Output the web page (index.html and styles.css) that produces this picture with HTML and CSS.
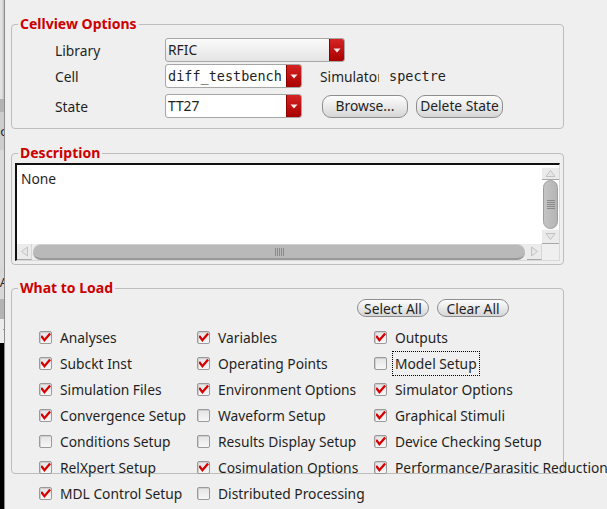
FILE: index.html
```html
<!DOCTYPE html>
<html>
<head>
<meta charset="utf-8">
<link rel="stylesheet" href="styles.css">
</head>
<body>
<div class="screen">
  <div class="strip">
    <div class="s s1"></div>
    <div class="s s2"></div>
    <div class="s s3"><span>o</span></div>
    <div class="s s4"></div>
    <div class="s s5"><span>A</span></div>
    <div class="s s6"></div>
    <div class="s s7"><span>t</span></div>
    <div class="s s8"></div>
  </div>
  <div class="dialog">
    <section class="group g-cell">
      <div class="group-title">Cellview Options</div>
      <div class="rows">
        <div class="row">
          <span class="lbl">Library</span>
          <div class="combo combo-ro w-wide"><span class="combo-text">RFIC</span><span class="drop"><svg width="8" height="5" viewBox="0 0 8 5"><path d="M0.5 0.5H7.5L4 4.5Z" fill="#fbeaea"/></svg></span></div>
        </div>
        <div class="row">
          <span class="lbl">Cell</span>
          <div class="combo w-narrow"><span class="combo-text mono">diff_testbench</span><span class="drop"><svg width="8" height="5" viewBox="0 0 8 5"><path d="M0.5 0.5H7.5L4 4.5Z" fill="#fbeaea"/></svg></span></div>
          <span class="sim-label">Simulator</span><span class="mono sim-value">spectre</span>
        </div>
        <div class="row row-state">
          <span class="lbl">State</span>
          <div class="combo w-narrow"><span class="combo-text">TT27</span><span class="drop"><svg width="8" height="5" viewBox="0 0 8 5"><path d="M0.5 0.5H7.5L4 4.5Z" fill="#fbeaea"/></svg></span></div>
          <button class="btn btn-browse">Browse...</button>
          <button class="btn btn-delete">Delete State</button>
        </div>
      </div>
    </section>

    <section class="group g-desc">
      <div class="group-title">Description</div>
      <div class="textarea">
        <div class="text-content">None</div>
        <div class="vsb">
          <div class="sb-btn"><svg width="13" height="13" viewBox="0 0 13 13"><path d="M2 9.5 L6.5 3.5 L11 9.5 Z" fill="#e6e6e6" stroke="#c2c2c2"/></svg></div>
          <div class="vthumb"><svg width="8" height="9" viewBox="0 0 8 9"><path d="M0 0.5H8M0 2.5H8M0 4.5H8M0 6.5H8M0 8.5H8" stroke="#8a8a8a"/></svg></div>
          <div class="sb-btn"><svg width="13" height="13" viewBox="0 0 13 13"><path d="M2 3.5 L6.5 9.5 L11 3.5 Z" fill="#e6e6e6" stroke="#c2c2c2"/></svg></div>
        </div>
        <div class="hsb">
          <div class="sb-btn hbtn"><svg width="13" height="13" viewBox="0 0 13 13"><path d="M9.5 2 L3.5 6.5 L9.5 11 Z" fill="#e6e6e6" stroke="#c2c2c2"/></svg></div>
          <div class="hthumb"><svg width="9" height="8" viewBox="0 0 9 8"><path d="M0.5 0V8M2.5 0V8M4.5 0V8M6.5 0V8M8.5 0V8" stroke="#8a8a8a"/></svg></div>
          <div class="sb-btn hbtn"><svg width="13" height="13" viewBox="0 0 13 13"><path d="M3.5 2 L9.5 6.5 L3.5 11 Z" fill="#e6e6e6" stroke="#c2c2c2"/></svg></div>
        </div>
        <div class="corner"></div>
      </div>
    </section>

    <section class="group g-load">
      <div class="group-title">What to Load</div>
      <div class="btn-row">
        <button class="btn btn-small">Select All</button>
        <button class="btn btn-small">Clear All</button>
      </div>
      <div class="checks">
        <label class="chk"><span class="box on"></span><span>Analyses</span></label>
        <label class="chk"><span class="box on"></span><span>Variables</span></label>
        <label class="chk"><span class="box on"></span><span>Outputs</span></label>
        <label class="chk"><span class="box on"></span><span>Subckt Inst</span></label>
        <label class="chk"><span class="box on"></span><span>Operating Points</span></label>
        <label class="chk"><span class="box"></span><span class="focus">Model Setup</span></label>
        <label class="chk"><span class="box on"></span><span>Simulation Files</span></label>
        <label class="chk"><span class="box on"></span><span>Environment Options</span></label>
        <label class="chk"><span class="box on"></span><span>Simulator Options</span></label>
        <label class="chk"><span class="box on"></span><span>Convergence Setup</span></label>
        <label class="chk"><span class="box"></span><span>Waveform Setup</span></label>
        <label class="chk"><span class="box on"></span><span>Graphical Stimuli</span></label>
        <label class="chk"><span class="box"></span><span>Conditions Setup</span></label>
        <label class="chk"><span class="box"></span><span>Results Display Setup</span></label>
        <label class="chk"><span class="box on"></span><span>Device Checking Setup</span></label>
        <label class="chk"><span class="box on"></span><span>RelXpert Setup</span></label>
        <label class="chk"><span class="box on"></span><span>Cosimulation Options</span></label>
        <label class="chk"><span class="box on"></span><span>Performance/Parasitic Reduction</span></label>
        <label class="chk"><span class="box on"></span><span>MDL Control Setup</span></label>
        <label class="chk"><span class="box"></span><span>Distributed Processing</span></label>
      </div>
    </section>
  </div>
</div>
</body>
</html>
```

FILE: styles.css
```css
* { box-sizing: border-box; }
html, body { margin: 0; padding: 0; }
body {
  background: #efefef;
  font-family: "Noto Sans", "DejaVu Sans", sans-serif;
  font-size: 13.8px;
  color: #1f1f1f;
}
.screen {
  display: flex;
  width: 607px;
  height: 509px;
  overflow: hidden;
}

/* strip of a window behind the dialog */
.strip {
  width: 4px;
  flex: none;
  display: flex;
  flex-direction: column;
  overflow: hidden;
  font-size: 13px;
}
.s { display: flex; justify-content: flex-end; overflow: hidden; white-space: nowrap; }
.s span { margin-right: -4px; line-height: 1; }
.s1 { height: 99px; background: linear-gradient(90deg, #e2e2e2 0, #e2e2e2 2px, #c8c8c8 3px); }
.s2 { height: 13px; background: #b4b4b4; }
.s3 { height: 38px; background: #cdcdcd; align-items: center; }
.s4 { height: 116px; background: #dadada; }
.s5 { height: 33px; background: #d8d8d8; align-items: center; }
.s6 { height: 20px; background: #b4b4b4; }
.s7 { height: 24px; background: #ececec; align-items: center; }
.s8 { flex: 1; background: #000; }

.dialog {
  flex: 1;
  min-width: 0;
  border-left: 1px solid #8c8c8c;
  padding: 24px 43px 0 6px;
}

.group {
  border: 1px solid #bdbdbd;
  border-radius: 4px;
}
.group-title {
  width: fit-content;
  margin: -10px 0 0 6px;
  padding: 0 2px;
  background: #efefef;
  color: #cc0000;
  font-weight: 700;
  font-size: 14px;
  line-height: 18px;
}

/* Cellview options */
.rows {
  display: flex;
  flex-direction: column;
  padding: 4px 0 9px 43px;
}
.row {
  display: flex;
  align-items: center;
  height: 26px;
}
.row-state { margin-top: 4px; }
.lbl {
  width: 110px;
  flex: none;
}
.mono {
  font-family: "DejaVu Sans Mono", "Liberation Mono", monospace;
  font-size: 13.5px;
}
.combo {
  display: flex;
  height: 24px;
  border: 1px solid #a6a6a6;
  border-radius: 3px;
  background: #fff;
  overflow: hidden;
  flex: none;
}
.combo-ro { background: linear-gradient(#fbfbfb, #e4e4e4); }
.w-wide { width: 180px; }
.w-narrow { width: 137px; }
.combo-text {
  flex: 1;
  padding-left: 2px;
  line-height: 22px;
  white-space: nowrap;
  overflow: hidden;
}
.drop {
  width: 15px;
  flex: none;
  display: flex;
  align-items: center;
  justify-content: center;
  background: linear-gradient(#d52424, #a80000);
  border-left: 1px solid #8c0000;
}
.sim-label {
  margin-left: 18px;
  width: 59px;
  overflow: hidden;
  white-space: nowrap;
  flex: none;
}
.sim-value { margin-left: 10px; }

.btn {
  font-family: "Noto Sans", "DejaVu Sans", sans-serif;
  font-size: 13.8px;
  color: #1f1f1f;
  border: 1px solid #8e8e8e;
  border-radius: 9px;
  background: linear-gradient(#fdfdfd, #d6d6d6);
  padding: 0;
  height: 23px;
  line-height: 20px;
  text-align: center;
  flex: none;
}
.btn-browse { width: 86px; margin-left: 20px; }
.btn-delete { width: 87px; margin-left: 8px; }

/* Description */
.g-desc { margin-top: 24px; padding: 0 3px 3px; }
.g-desc .group-title { margin-left: 3px; }
.textarea {
  margin-top: 1px;
  height: 98px;
  display: grid;
  grid-template-columns: 1fr 17px;
  grid-template-rows: 1fr 16px;
  border-top: 2px solid #111;
  border-left: 2px solid #111;
  border-right: 1px solid #d8d8d8;
  border-bottom: 1px solid #d8d8d8;
  background: #fff;
}
.text-content {
  padding: 4px 4px;
  line-height: 20px;
}
.vsb {
  display: flex;
  flex-direction: column;
  padding-top: 2px;
  background: #fff;
}
.sb-btn {
  height: 13px;
  flex: none;
  display: flex;
  align-items: center;
  justify-content: center;
  background: #ebebeb;
  border-top: 1px solid #fafafa;
  border-bottom: 1px solid #a8a8a8;
}
.vsb .sb-btn:last-child { height: 15px; }
.vthumb {
  flex: 1;
  margin: 0 1px;
  border-radius: 8px;
  background: linear-gradient(90deg, #c4c4c4, #b4b4b4);
  border: 1px solid #9c9c9c;
  display: flex;
  align-items: center;
  justify-content: center;
}
.hsb {
  display: flex;
  background: #ececec;
}
.hbtn {
  height: 16px;
  width: 15px;
  border-top: none;
  border-right: 1px solid #d6d6d6;
}
.hthumb {
  flex: 1;
  margin: 0 2px 0 1px;
  border-radius: 8px;
  background: #b9b9b9;
  border-top: 1px solid #cfcfcf;
  border-bottom: 2px solid #989898;
  display: flex;
  align-items: center;
  justify-content: center;
}
.corner { background: #efefef; }

/* What to load */
.g-load {
  margin-top: 23px;
  height: 186px;
}
.btn-row {
  display: flex;
  justify-content: flex-end;
  gap: 8px;
  padding-right: 54px;
  margin-top: 2px;
}
.btn-small {
  width: 72px;
  height: 18px;
  line-height: 15px;
}
.checks {
  margin-top: 7px;
  padding-left: 27px;
  display: grid;
  grid-template-columns: 158px 177px 1fr;
  grid-auto-rows: 26px;
}
.chk {
  display: flex;
  align-items: center;
  gap: 8px;
  white-space: nowrap;
}
.box {
  width: 13px;
  height: 13px;
  flex: none;
  border: 1px solid #9a9a9a;
  border-radius: 2px;
  background: linear-gradient(#e4e4e4, #f7f7f7);
  box-shadow: inset 1px 1px 0 #cfcfcf;
}
.box.on {
  background:
    url("data:image/svg+xml;utf8,<svg xmlns='http://www.w3.org/2000/svg' width='11' height='11' viewBox='0 0 11 11'><path d='M1.8 4.8 L4.4 8.2 L9.4 2.4' fill='none' stroke='%23d80000' stroke-width='2.3' stroke-linecap='square'/></svg>") center / 11px 11px no-repeat,
    linear-gradient(#e4e4e4, #f7f7f7);
}
.focus {
  outline: 1px dotted #000;
  padding: 2px 2px;
  margin: 0 -2px;
  line-height: 19px;
}
```
